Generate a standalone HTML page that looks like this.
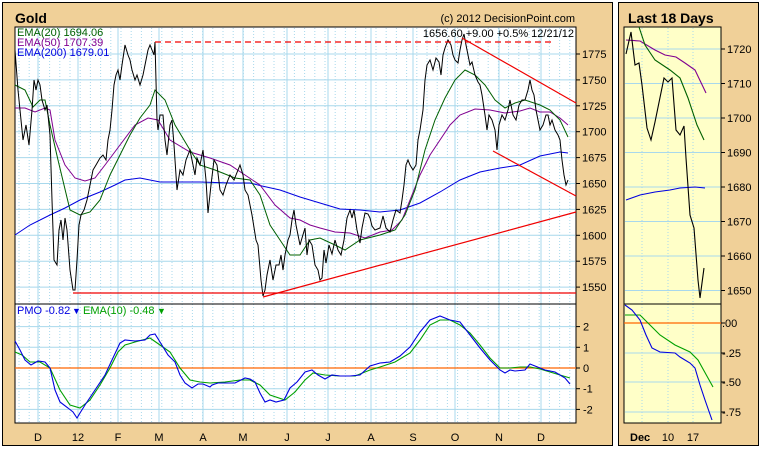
<!DOCTYPE html>
<html><head><meta charset="utf-8"><style>
body{margin:0;background:#fff;width:762px;height:451px;overflow:hidden}
svg text{font-family:"Liberation Sans",sans-serif;font-size:11px}
</style></head><body>
<svg id="s" width="762" height="451" xmlns="http://www.w3.org/2000/svg">
<rect x="0" y="0" width="762" height="451" fill="#fff"/>
<rect x="2.5" y="2.5" width="610" height="443" fill="#F0D098" stroke="#000"/>
<rect x="618.5" y="2.5" width="140" height="443" fill="#F0D098" stroke="#000"/>
<text x="15" y="23" style="font-size:14px;font-weight:bold">Gold</text>
<text x="628" y="23" style="font-size:14px;font-weight:bold">Last 18 Days</text>
<text x="575" y="22" text-anchor="end">(c) 2012 DecisionPoint.com</text>
<rect x="15" y="27" width="561" height="396" fill="#fff" stroke="#000"/>
<rect x="624" y="27" width="97" height="396" fill="#FFFFC8" stroke="#000"/>
<g id="grid" stroke="#A8D8EC" stroke-width="1"></g>
<g fill="none" stroke-width="1">
<polyline stroke="#0000E0" points="15,235 30,225 50,215 65,208 80,200 100,192 115,185 125,180 140,178 160,182 180,182 200,182 230,183 250,183 262,186 280,190 300,197 320,203 340,209 360,210 380,212 400,210 420,203 440,192 460,180 480,172 500,168 520,165 540,156 560,152 568,153"/>
<polyline stroke="#800090" points="15,108 25,108 35,112 45,108 50,110 55,140 65,165 75,178 85,181 95,178 105,165 120,145 135,125 148,118 158,120 170,140 190,152 210,158 230,165 245,175 260,185 275,205 290,218 300,220 310,225 320,228 335,232 350,233 365,238 380,232 392,230 402,220 410,200 420,175 430,155 440,140 450,125 460,115 475,109 490,110 505,113 520,111 530,108 540,112 550,112 560,118 568,125"/>
<polyline stroke="#006000" points="15,85 25,90 33,107 40,100 45,100 50,125 58,160 70,210 80,215 90,212 100,200 110,175 120,155 130,135 140,118 150,105 155,90 165,100 175,125 190,150 200,165 215,170 235,178 250,180 260,195 270,225 280,240 290,255 300,255 310,240 320,238 335,245 345,250 360,240 380,235 395,230 405,215 415,190 425,150 435,120 445,98 455,80 465,70 475,75 485,85 495,100 505,108 515,103 525,100 540,105 550,110 560,120 568,137"/>
<polyline stroke="#000" points="15,50 18,90 20,110 23,140 26,125 29,145 32,110 34,80 36,90 38,80 40,85 42,100 45,110 47,105 50,135 52,200 54,260 57,265 59,230 61,220 63,240 65,218 67,230 70,270 73,290 75,290 77,260 79,225 81,215 84,210 87,200 90,185 93,170 96,165 100,158 103,155 106,160 108,140 110,130 112,110 114,85 116,75 118,70 120,80 122,65 125,45 128,55 130,60 132,70 135,80 137,75 140,85 143,75 146,60 148,50 150,45 152,50 154,55 155,42 157,120 158,130 160,115 163,115 165,140 167,155 170,125 172,120 174,145 177,190 180,170 183,175 186,160 190,150 195,175 197,158 200,165 203,150 206,180 208,213 211,185 214,160 217,165 220,190 223,195 226,185 230,175 234,180 238,170 240,165 243,175 245,190 248,195 252,215 256,240 258,245 261,280 263,296 265,290 267,275 270,260 273,280 276,265 279,265 281,255 283,270 285,255 286,250 288,240 290,235 292,220 294,210 296,225 298,235 300,245 302,238 305,228 307,255 309,240 312,245 315,265 318,270 320,280 322,278 324,250 326,263 329,245 332,254 335,240 338,250 341,255 344,240 347,218 350,210 352,218 354,210 357,230 360,243 362,228 365,213 368,214 370,218 372,226 375,230 380,228 383,216 386,228 390,232 393,220 396,210 400,213 402,200 404,185 406,165 408,160 410,165 413,170 416,165 418,140 420,130 423,110 425,80 427,65 430,60 433,70 436,58 439,62 441,75 443,55 445,48 448,40 451,45 453,55 455,60 458,63 460,50 462,40 464,34 466,45 468,55 470,65 472,62 475,75 478,82 480,85 482,95 485,115 487,130 489,115 492,120 495,130 497,150 499,125 502,115 505,120 508,110 510,100 513,115 516,120 519,105 522,100 525,100 528,90 530,80 532,90 534,95 536,110 538,120 540,130 543,125 546,115 548,115 550,125 552,120 555,130 558,135 560,140 562,160 564,175 566,185 568,180"/>
</g>
<g stroke="#F00000" stroke-width="1.2" fill="none">
<line x1="155" y1="42" x2="555" y2="42" stroke-dasharray="6,4"/>
<line x1="73" y1="293" x2="576" y2="293"/>
<line x1="263" y1="297" x2="576" y2="212"/>
<line x1="462" y1="38" x2="576" y2="103"/>
<line x1="493" y1="151" x2="576" y2="196"/>
</g>
<line x1="15" y1="304" x2="576" y2="304" stroke="#000"/>
<line x1="15" y1="368" x2="576" y2="368" stroke="#FF6600" stroke-width="1.2"/>
<g fill="none" stroke-width="1.1">
<polyline stroke="#00A000" points="15,352 22,355 30,362 40,362 50,368 60,390 70,405 80,408 90,400 100,385 110,368 118,352 125,345 135,342 150,338 160,345 170,352 180,368 190,380 200,382 210,383 225,382 240,380 250,380 260,385 270,395 285,400 295,392 305,380 313,373 325,375 340,376 355,376 370,370 380,367 395,362 410,353 420,340 430,325 440,320 450,320 460,325 470,333 480,345 490,358 500,368 510,368 520,367 530,367 540,369 550,372 560,375 570,378"/>
<polyline stroke="#0000E0" points="15,341 20,350 25,360 31,365 38,361 45,362 50,368 55,390 60,402 68,408 73,412 77,418 80,413 85,405 95,390 105,375 112,360 120,343 125,340 135,341 145,340 150,335 155,334 160,342 168,355 175,362 180,375 185,383 192,388 198,384 203,384 210,387 212,385 218,383 225,383 235,383 245,378 250,379 255,382 260,393 265,402 270,400 276,402 284,400 290,388 297,382 305,372 312,370 318,375 325,379 332,375 340,376 350,376 360,375 370,366 380,363 390,362 400,356 410,347 420,332 430,320 440,316 450,320 460,322 470,335 480,348 490,360 500,370 505,373 510,370 515,371 525,370 530,364 535,366 545,370 555,372 565,378 570,384"/>
</g>
<line x1="624" y1="304" x2="721" y2="304" stroke="#000"/>
<line x1="624" y1="323" x2="721" y2="323" stroke="#FF6600" stroke-width="1.2"/>
<g fill="none" stroke-width="1.1">
<polyline stroke="#0000E0" points="626,200 640,195 655,192 670,190 680,188 695,187 705,188"/>
<polyline stroke="#800090" points="626,40 640,41 655,50 665,55 676,57 685,63 695,70 706,93"/>
<polyline stroke="#006000" points="639,27 645,45 655,60 670,70 680,78 688,98 697,125 704,140"/>
<polyline stroke="#000" points="626,54 631,32 635,65 639,63 642,85 647,128 651,140 655,122 664,78 668,82 672,78 676,130 680,135 684,126 686,158 690,215 694,228 698,280 700,298 704,268"/>
<polyline stroke="#00A000" points="625,315 640,315 650,325 660,335 675,345 690,352 698,360 708,378 713,387"/>
<polyline stroke="#0000E0" points="625,305 632,310 640,320 646,335 652,348 660,352 675,353 680,357 690,363 695,368 700,385 705,400 712,420"/>
</g>
<text x="17" y="36" fill="#006000">EMA(20) 1694.06</text>
<text x="17" y="46" fill="#800090">EMA(50) 1707.39</text>
<text x="17" y="56" fill="#0000E0">EMA(200) 1679.01</text>
<text x="574" y="37" text-anchor="end">1656.60  +9.00  +0.5%  12/21/12</text>
<text x="17" y="314" fill="#0000E0">PMO -0.82</text>
<text x="72" y="314" fill="#0000E0" style="font-size:9px">▼</text>
<text x="83" y="314" fill="#00A000">EMA(10) -0.48</text>
<text x="157" y="314" fill="#00A000" style="font-size:9px">▼</text>
<g id="lab"></g>
</svg>
<script>
var g=document.getElementById('grid'),lab=document.getElementById('lab'),NS='http://www.w3.org/2000/svg';
function L(x1,y1,x2,y2,d,c){var l=document.createElementNS(NS,'line');l.setAttribute('x1',x1);l.setAttribute('y1',y1);l.setAttribute('x2',x2);l.setAttribute('y2',y2);if(d)l.setAttribute('stroke-dasharray','1,2');if(c)l.setAttribute('stroke',c);g.appendChild(l);}
function T(x,y,t,a,b){var e=document.createElementNS(NS,'text');e.setAttribute('x',x);e.setAttribute('y',y);if(a)e.setAttribute('text-anchor',a);if(b)e.setAttribute('font-weight','bold');e.textContent=t;lab.appendChild(e);}
for(var x=19;x<576;x+=10.2)L(x,28,x,422,1);
[38,78,118,159,203,243,287,328,371,413,455,499,541].forEach(function(x){L(x,28,x,422);});
var p=['D','12','F','M','A','M','J','J','A','S','O','N','D'];[38,78,118,159,203,243,287,328,371,413,455,499,541].forEach(function(x,i){T(x,441,p[i],'middle');});
[1775,1750,1725,1700,1675,1650,1625,1600,1575,1550].forEach(function(v){var y=54+(1775-v)*1.036;L(16,y,575,y);L(576,y,580,y,0,'#000');T(582,y+4,v);});
[2,1,0,-1,-2].forEach(function(v){var y=368-v*20.7;L(16,y,575,y);L(576,y,580,y,0,'#000');T(583,y+4,v);});
[642,668,693].forEach(function(x){L(x,28,x,422,1);});
[1720,1710,1700,1690,1680,1670,1660,1650].forEach(function(v){var y=49+(1720-v)*3.45;L(625,y,720,y);L(721,y,725,y,0,'#000');T(727,y+4,v);});
[['.00',323],['-.25',353],['-.50',382],['-.75',412]].forEach(function(a){L(625,a[1],720,a[1]);L(721,a[1],725,a[1],0,'#000');T(722,a[1]+4,a[0]);});
T(630,441,'Dec',0,1);T(668,441,'10','middle');T(693,441,'17','middle');
</script>
</body></html>
